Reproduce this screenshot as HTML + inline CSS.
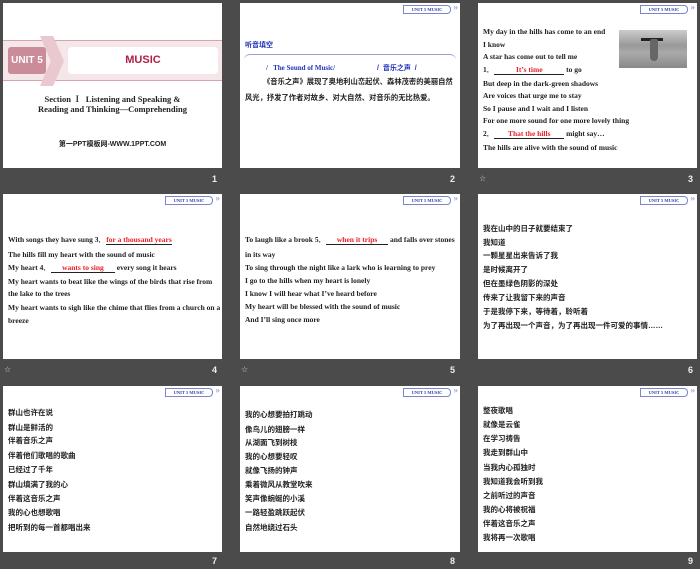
<!DOCTYPE html>
<html><head><meta charset="utf-8"><style>
*{margin:0;padding:0;box-sizing:border-box}
body{width:700px;height:569px;background:#4b4b4b;position:relative;overflow:hidden;font-family:"Liberation Serif","Noto Serif CJK SC",serif}
.s{position:absolute;background:#fff;overflow:hidden}
.t{position:absolute;font-size:7.5px;font-weight:bold;color:#222;white-space:nowrap;line-height:9px}
.c{font-family:"Liberation Sans","Noto Sans CJK SC",sans-serif;font-size:7.5px}
.r{color:#e8202a}
.b{color:#2233bb}
.n{position:absolute;color:#eee;font:bold 9px "Liberation Sans",sans-serif}
.st{position:absolute;color:#ccc;font:8px "DejaVu Sans",sans-serif}
.badge{position:absolute;right:9px;top:2px;width:48px;height:9px;border:1px solid #7a86c8;font:bold 4.5px "Liberation Serif",serif;color:#3344aa;text-align:center;line-height:7px;border-radius:0 4px 4px 0}
.badge:after{content:"»";position:absolute;right:-8px;top:-2px;font-size:9px;color:#9aa6d8}
.u{display:inline-block;border-bottom:1px solid #222;text-align:center}
</style></head><body>

<!-- slide 1 -->
<div class="s" style="left:3px;top:3px;width:219px;height:165px">
 <div style="position:absolute;left:0;top:37px;width:219px;height:41px;background:#f4e6e9;border-top:1px solid #d9a3ad;border-bottom:1px solid #d9a3ad"></div>
 <div style="position:absolute;left:37px;top:33px;width:24px;height:50px;background:#e9c9cf;clip-path:polygon(0 0,55% 0,100% 50%,55% 100%,0 100%,45% 50%)"></div>
 <div style="position:absolute;left:5px;top:44px;width:38px;height:27px;background:#c98c98;border-radius:3px;color:#fff;font:bold 10px 'Liberation Sans',sans-serif;line-height:27px;text-align:center">UNIT 5</div>
 <div style="position:absolute;left:65px;top:44px;width:150px;height:27px;background:#fff;border-radius:4px;color:#b02048;font:bold 11px 'Liberation Sans',sans-serif;line-height:27px;text-align:center">MUSIC</div>
 <div class="t" style="left:0;width:219px;top:91px;text-align:center;font-size:8.5px;line-height:10px">Section Ⅰ&nbsp; Listening and Speaking &amp;<br>Reading and Thinking—Comprehending</div>
 <div class="t" style="left:0;width:219px;top:136px;text-align:center;font:bold 7px 'Liberation Sans','Noto Sans CJK SC',sans-serif">第一PPT模板网-WWW.1PPT.COM</div>
</div>
<div class="n" style="left:212px;top:174px">1</div>

<!-- slide 2 -->
<div class="s" style="left:240px;top:3px;width:220px;height:165px">
 <div class="badge">UNIT 5 MUSIC</div>
 <div class="t c b" style="left:5px;top:38px;font-size:7px">听音填空</div>
 <div style="position:absolute;left:4px;top:51px;width:212px;height:8px;border-top:1px solid #9aa0d0;border-radius:6px 6px 0 0"></div>
 <div class="t b" style="left:26px;top:61px;font-size:7px">/&nbsp;&nbsp; The Sound of Music/</div>
 <div class="t c b" style="left:137px;top:61px;font-size:7px">/&nbsp; 音乐之声&nbsp; /</div>
 <div class="t c" style="left:23px;top:74px;font-size:7.3px">《音乐之声》展现了奥地利山峦起伏、森林茂密的美丽自然</div>
 <div class="t c" style="left:5px;top:90px;font-size:7.3px">风光，抒发了作者对故乡、对大自然、对音乐的无比热爱。</div>
</div>
<div class="n" style="left:450px;top:174px">2</div>

<!-- slide 3 -->
<div class="s" style="left:478px;top:3px;width:219px;height:165px">
 <div class="badge">UNIT 5 MUSIC</div>
 <div style="position:absolute;left:141px;top:27px;width:68px;height:38px;background:linear-gradient(180deg,#ccc,#999 40%,#aaa 60%,#888)"></div>
 <div style="position:absolute;left:163px;top:35px;width:22px;height:3px;background:#222"></div>
 <div style="position:absolute;left:172px;top:36px;width:8px;height:22px;background:#666;border-radius:3px 3px 6px 6px"></div>
 <div class="t" style="left:5px;top:24px">My day in the hills has come to an end</div>
 <div class="t" style="left:5px;top:37px">I know</div>
 <div class="t" style="left:5px;top:49px">A star has come out to tell me</div>
 <div class="t" style="left:5px;top:62px">1．<span class="u r" style="width:70px">It’s time</span> to go</div>
 <div class="t" style="left:5px;top:76px">But deep in the dark-green shadows</div>
 <div class="t" style="left:5px;top:88px">Are voices that urge me to stay</div>
 <div class="t" style="left:5px;top:101px">So I pause and I wait and I listen</div>
 <div class="t" style="left:5px;top:113px">For one more sound for one more lovely thing</div>
 <div class="t" style="left:5px;top:126px">2．<span class="u r" style="width:70px">That the hills</span> might say…</div>
 <div class="t" style="left:5px;top:140px">The hills are alive with the sound of music</div>
</div>
<div class="st" style="left:479px;top:174px">☆</div>
<div class="n" style="left:688px;top:174px">3</div>

<!-- slide 4 -->
<div class="s" style="left:3px;top:194px;width:219px;height:165px">
 <div class="badge">UNIT 5 MUSIC</div>
 <div class="t" style="left:5px;top:41px">With songs they have sung 3．<span class="u r" style="width:66px">for a thousand years</span></div>
 <div class="t" style="left:5px;top:56px">The hills fill my heart with the sound of music</div>
 <div class="t" style="left:5px;top:69px">My heart 4．<span class="u r" style="width:64px">wants to sing</span> every song it hears</div>
 <div class="t" style="left:5px;top:83px">My heart wants to beat like the wings of the birds that rise from</div>
 <div class="t" style="left:5px;top:95px">the lake to the trees</div>
 <div class="t" style="left:5px;top:109px">My heart wants to sigh like the chime that flies from a church on a</div>
 <div class="t" style="left:5px;top:122px">breeze</div>
</div>
<div class="st" style="left:4px;top:365px">☆</div>
<div class="n" style="left:212px;top:365px">4</div>

<!-- slide 5 -->
<div class="s" style="left:240px;top:194px;width:220px;height:165px">
 <div class="badge">UNIT 5 MUSIC</div>
 <div class="t" style="left:5px;top:41px">To laugh like a brook 5．<span class="u r" style="width:62px">when it trips</span> and falls over stones</div>
 <div class="t" style="left:5px;top:56px">in its way</div>
 <div class="t" style="left:5px;top:69px">To sing through the night like a lark who is learning to prey</div>
 <div class="t" style="left:5px;top:82px">I go to the hills when my heart is lonely</div>
 <div class="t" style="left:5px;top:95px">I know I will hear what I’ve heard before</div>
 <div class="t" style="left:5px;top:108px">My heart will be blessed with the sound of music</div>
 <div class="t" style="left:5px;top:121px">And I’ll sing once more</div>
</div>
<div class="st" style="left:241px;top:365px">☆</div>
<div class="n" style="left:450px;top:365px">5</div>

<!-- slide 6 -->
<div class="s" style="left:478px;top:194px;width:219px;height:165px">
 <div class="badge">UNIT 5 MUSIC</div>
 <div class="t c" style="left:5px;top:30px">我在山中的日子就要结束了</div>
 <div class="t c" style="left:5px;top:44px">我知道</div>
 <div class="t c" style="left:5px;top:57px">一颗星星出来告诉了我</div>
 <div class="t c" style="left:5px;top:71px">是时候离开了</div>
 <div class="t c" style="left:5px;top:85px">但在墨绿色阴影的深处</div>
 <div class="t c" style="left:5px;top:99px">传来了让我留下来的声音</div>
 <div class="t c" style="left:5px;top:113px">于是我停下来，等待着，聆听着</div>
 <div class="t c" style="left:5px;top:127px">为了再出现一个声音，为了再出现一件可爱的事情……</div>
</div>
<div class="n" style="left:688px;top:365px">6</div>

<!-- slide 7 -->
<div class="s" style="left:3px;top:386px;width:219px;height:166px">
 <div class="badge">UNIT 5 MUSIC</div>
 <div class="t c" style="left:5px;top:22px">群山也许在说</div>
 <div class="t c" style="left:5px;top:37px">群山是鲜活的</div>
 <div class="t c" style="left:5px;top:50px">伴着音乐之声</div>
 <div class="t c" style="left:5px;top:65px">伴着他们歌唱的歌曲</div>
 <div class="t c" style="left:5px;top:79px">已经过了千年</div>
 <div class="t c" style="left:5px;top:94px">群山填满了我的心</div>
 <div class="t c" style="left:5px;top:108px">伴着这音乐之声</div>
 <div class="t c" style="left:5px;top:122px">我的心也想歌唱</div>
 <div class="t c" style="left:5px;top:137px">把听到的每一首都唱出来</div>
</div>
<div class="n" style="left:212px;top:556px">7</div>

<!-- slide 8 -->
<div class="s" style="left:240px;top:386px;width:220px;height:166px">
 <div class="badge">UNIT 5 MUSIC</div>
 <div class="t c" style="left:5px;top:24px">我的心想要拍打跳动</div>
 <div class="t c" style="left:5px;top:39px">像鸟儿的翅膀一样</div>
 <div class="t c" style="left:5px;top:52px">从湖面飞到树枝</div>
 <div class="t c" style="left:5px;top:66px">我的心想要轻叹</div>
 <div class="t c" style="left:5px;top:80px">就像飞扬的钟声</div>
 <div class="t c" style="left:5px;top:94px">乘着微风从教堂吹来</div>
 <div class="t c" style="left:5px;top:108px">笑声像蜿蜒的小溪</div>
 <div class="t c" style="left:5px;top:122px">一路轻盈跳跃起伏</div>
 <div class="t c" style="left:5px;top:137px">自然地绕过石头</div>
</div>
<div class="n" style="left:450px;top:556px">8</div>

<!-- slide 9 -->
<div class="s" style="left:478px;top:386px;width:219px;height:166px">
 <div class="badge">UNIT 5 MUSIC</div>
 <div class="t c" style="left:5px;top:20px">整夜歌唱</div>
 <div class="t c" style="left:5px;top:34px">就像是云雀</div>
 <div class="t c" style="left:5px;top:48px">在学习祷告</div>
 <div class="t c" style="left:5px;top:62px">我走到群山中</div>
 <div class="t c" style="left:5px;top:77px">当我内心孤独时</div>
 <div class="t c" style="left:5px;top:91px">我知道我会听到我</div>
 <div class="t c" style="left:5px;top:105px">之前听过的声音</div>
 <div class="t c" style="left:5px;top:119px">我的心将被祝福</div>
 <div class="t c" style="left:5px;top:133px">伴着这音乐之声</div>
 <div class="t c" style="left:5px;top:147px">我将再一次歌唱</div>
</div>
<div class="n" style="left:688px;top:556px">9</div>

</body></html>
